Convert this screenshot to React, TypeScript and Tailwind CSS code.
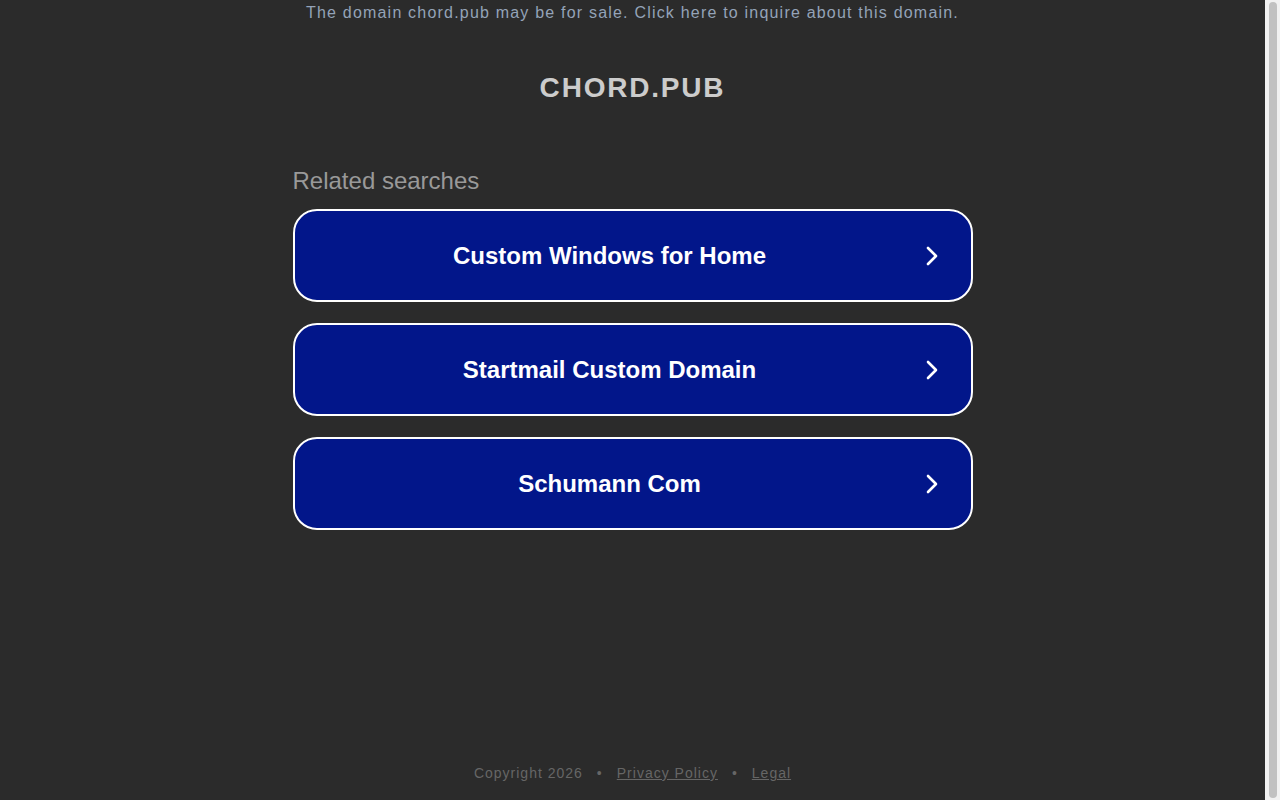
import React from 'react'

const searches = ['Custom Windows for Home', 'Startmail Custom Domain', 'Schumann Com']

function Chevron() {
  return (
    <svg width="14" height="22" viewBox="0 0 14 22" fill="none" className="shrink-0">
      <polyline points="3,3 11,11 3,19" stroke="white" strokeWidth="2.6" strokeLinecap="round" strokeLinejoin="round" />
    </svg>
  )
}

export default function App() {
  return (
    <div className="flex h-screen bg-[#2b2b2b]" style={{ fontFamily: '"Liberation Sans", Arial, sans-serif' }}>
      <div className="flex flex-1 flex-col items-center">
        {/* Sale banner */}
        <div className="pt-[3px] text-[16px] leading-[20px] tracking-[1.2px] text-[#94a3b8]">
          The domain chord.pub may be for sale. Click here to inquire about this domain.
        </div>

        {/* Domain title */}
        <h1 className="mt-[49px] text-[28px] font-bold leading-[32px] tracking-[1.8px] text-[#cccccc]">CHORD.PUB</h1>

        {/* Related searches */}
        <div className="mt-[63px] w-[680px]">
          <div className="text-[24px] leading-[28px] text-[#999999]">Related searches</div>
          <div className="mt-[14px] flex flex-col gap-[21px]">
            {searches.map((s) => (
              <div
                key={s}
                className="flex h-[93px] items-center rounded-[24px] border-2 border-white bg-[#02168a] pl-[40px] pr-[32px]"
              >
                <span className="flex-1 text-center text-[24px] font-bold text-white">{s}</span>
                <div className="ml-[40px]">
                  <Chevron />
                </div>
              </div>
            ))}
          </div>
        </div>

        {/* Footer */}
        <div className="mt-auto mb-[17px] flex items-center gap-[14px] text-[14px] leading-[20px] tracking-[1px] text-[#666666]">
          <span>Copyright 2026</span>
          <span>•</span>
          <a className="underline">Privacy Policy</a>
          <span>•</span>
          <a className="underline">Legal</a>
        </div>
      </div>

      {/* Scrollbar */}
      <div className="flex w-[15px] shrink-0 justify-center bg-[#f1f1f1] py-[2px]">
        <div className="w-[8px] rounded-full bg-[#c1c1c1]" />
      </div>
    </div>
  )
}
